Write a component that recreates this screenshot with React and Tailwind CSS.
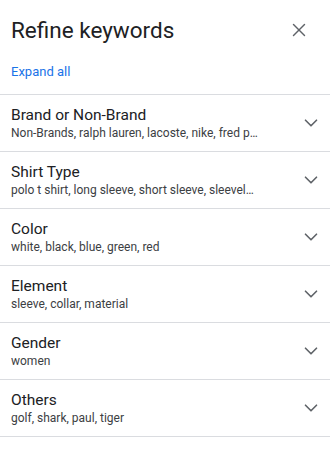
import React from "react";
import { X, ChevronDown } from "lucide-react";

const groups = [
  { title: "Brand or Non-Brand", items: "Non-Brands, ralph lauren, lacoste, nike, fred perry, polo" },
  { title: "Shirt Type", items: "polo t shirt, long sleeve, short sleeve, sleeveless" },
  { title: "Color", items: "white, black, blue, green, red" },
  { title: "Element", items: "sleeve, collar, material" },
  { title: "Gender", items: "women" },
  { title: "Others", items: "golf, shark, paul, tiger" },
];

export default function App() {
  return (
    <div className="w-[330px] h-[454px] bg-white font-['Roboto',sans-serif] overflow-hidden">
      <div className="flex items-center justify-between pl-[11px] pr-[20px] pt-[16px]">
        <h1 className="text-[22.5px] leading-[28px] text-[#202124]">Refine keywords</h1>
        <X className="w-[22px] h-[22px] text-[#5f6368]" strokeWidth={1.6} />
      </div>
      <div className="pl-[11px] pt-[15px] pb-[11px]">
        <button className="text-[13px] leading-[18px] text-[#1a73e8]">Expand all</button>
      </div>
      <div className="border-t border-[#dadce0]">
        {groups.map((g) => (
          <div key={g.title} className="flex items-center h-[57px] border-b border-[#dadce0] pl-[11px] pr-[8px]">
            <div className="flex-1 min-w-0 pr-[40px]">
              <div className="text-[15.5px] leading-[20px] text-[#202124]">{g.title}</div>
              <div className="text-[12px] leading-[16px] text-[#3c4043] truncate">{g.items}</div>
            </div>
            <ChevronDown className="w-[22px] h-[22px] text-[#5f6368]" strokeWidth={1.8} />
          </div>
        ))}
      </div>
    </div>
  );
}
